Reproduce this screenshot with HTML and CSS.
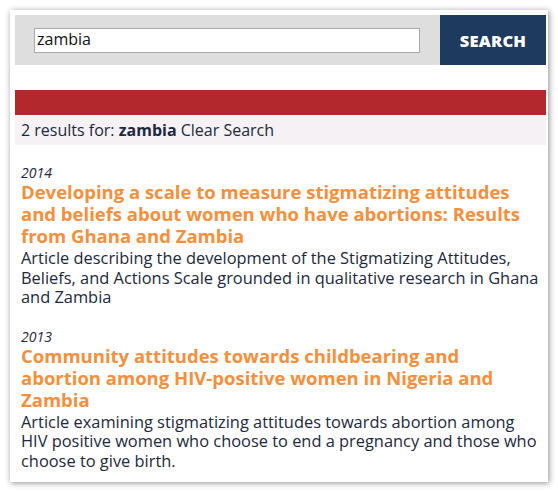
FILE: index.html
```html
<!DOCTYPE html>
<html>
<head>
<meta charset="utf-8">
<link rel="stylesheet" href="styles.css">
</head>
<body>
<div class="card">
  <div class="search">
    <div class="search-field">
      <input class="search-input" type="text" value="zambia">
    </div>
    <button class="search-btn">SEARCH</button>
  </div>
  <div class="red-bar"></div>
  <div class="results-bar">2 results for: <b>zambia</b> Clear Search</div>
  <div class="results">
    <div class="item">
      <div class="year">2014</div>
      <div class="title">Developing a scale to measure stigmatizing attitudes and beliefs about women who have abortions: Results from Ghana and Zambia</div>
      <div class="desc">Article describing the development of the Stigmatizing Attitudes, Beliefs, and Actions Scale grounded in qualitative research in Ghana and Zambia</div>
    </div>
    <div class="item">
      <div class="year">2013</div>
      <div class="title">Community attitudes towards childbearing and abortion among HIV-positive women in Nigeria and Zambia</div>
      <div class="desc">Article examining stigmatizing attitudes towards abortion among HIV positive women who choose to end a pregnancy and those who choose to give birth.</div>
    </div>
  </div>
</div>
</body>
</html>
```
FILE: styles.css
```css
html, body {
  margin: 0;
  padding: 0;
  background: #ffffff;
}
body {
  font-family: "Open Sans", sans-serif;
  color: #1c2940;
}
.card {
  margin: 10px 12px 10px 10px;
  width: 538px;
  height: 472px;
  box-sizing: border-box;
  padding: 5px 2px 0 5px;
  background: #fff;
  box-shadow: 1px 1px 6px rgba(0,0,0,0.45);
}
.search {
  display: flex;
  height: 50px;
  background: #dedede;
}
.search-field {
  flex: 1;
  display: flex;
  align-items: center;
  padding-left: 19px;
}
.search-input {
  width: 386px;
  height: 25px;
  box-sizing: border-box;
  border: 1px solid #a8a8a8;
  background: #fff;
  font-family: "Open Sans", sans-serif;
  font-size: 16px;
  color: #111;
  padding: 0 0 2px 2px;
  margin: 0;
}
.search-btn {
  width: 106px;
  border: 0;
  margin: 0;
  background: #1f3a5f;
  color: #fff;
  font-family: "Open Sans", sans-serif;
  font-weight: 800;
  font-size: 16.5px;
  letter-spacing: 0.2px;
}
.red-bar {
  margin-top: 25px;
  height: 25px;
  background: #b2282d;
}
.results-bar {
  height: 30px;
  background: #f5f1f5;
  font-size: 16px;
  line-height: 30px;
  padding-left: 6px;
}
.results-bar b {
  font-weight: 700;
}
.results {
  padding: 19px 0 0 6px;
  width: 519px;
}
.item {
  margin-bottom: 21px;
}
.year {
  font-style: italic;
  font-size: 14px;
  line-height: 17px;
}
.title {
  color: #f78f3a;
  font-weight: 700;
  font-size: 18.5px;
  line-height: 22px;
}
.desc {
  font-size: 16.4px;
  line-height: 19.5px;
  margin-top: 1px;
}
```
